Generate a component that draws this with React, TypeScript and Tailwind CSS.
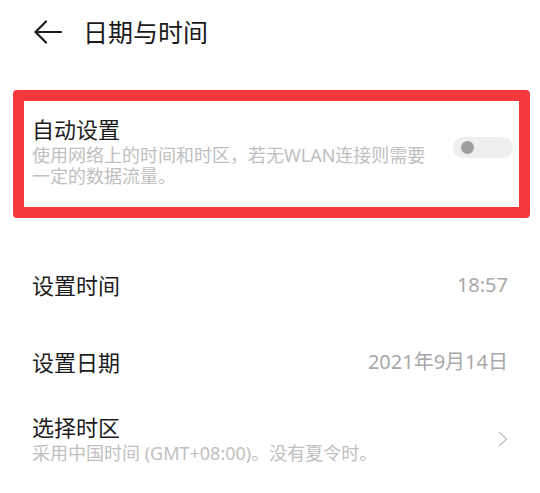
import { useState } from 'react';

const FONT = {
  fontFamily: '"Noto Sans", "Noto Sans CJK SC", sans-serif',
};

function BackArrow() {
  return (
    <svg width="28" height="24" viewBox="0 0 28 24" fill="none" aria-hidden="true">
      <path
        d="M27 12H2M12 1.5L1.5 12L12 22.5"
        stroke="#1c1c1c"
        strokeWidth="2.2"
        strokeLinecap="round"
        strokeLinejoin="round"
      />
    </svg>
  );
}

function Chevron() {
  return (
    <svg width="10" height="16" viewBox="0 0 10 16" fill="none" aria-hidden="true">
      <path
        d="M1.5 1.5L8.5 8L1.5 14.5"
        stroke="#c6c6c6"
        strokeWidth="1.6"
        strokeLinecap="round"
        strokeLinejoin="round"
      />
    </svg>
  );
}

function Toggle({ on, onChange }: { on: boolean; onChange: (v: boolean) => void }) {
  return (
    <button
      type="button"
      role="switch"
      aria-checked={on}
      onClick={() => onChange(!on)}
      className="relative mb-2 h-[21px] w-[60px] shrink-0 rounded-full bg-[#eeeeee]"
    >
      <span className="absolute left-[8px] top-[4px] h-[13px] w-[13px] rounded-full bg-[#9e9e9e]" />
    </button>
  );
}

function ValueRow({ title, value }: { title: string; value: string }) {
  return (
    <div className="flex h-[77px] items-center justify-between pl-[32px] pr-[32px]">
      <span className="text-[22px] leading-[28px] text-[#1c1c1c]">{title}</span>
      <span className="text-[20px] leading-[28px] text-[#a8a8a8]">{value}</span>
    </div>
  );
}

export default function App() {
  const [auto, setAuto] = useState(false);

  return (
    <div className="h-[493px] w-[540px] overflow-hidden bg-white" style={FONT}>
      {/* header */}
      <div className="flex h-16 items-center pl-[34px]">
        <BackArrow />
        <h1 className="ml-[21px] text-[25px] leading-[32px] text-[#1a1a1a]">日期与时间</h1>
      </div>

      {/* highlighted auto-setting row */}
      <div className="ml-[13px] mt-[26px] w-[517px] rounded-[4px] border-[11px] border-[#f5383c]">
        <div className="flex items-center justify-between pb-[20px] pl-[8px] pr-[6px] pt-[14px]">
          <div className="w-[400px] shrink-0">
            <div className="text-[22px] leading-[28px] text-[#1c1c1c]">自动设置</div>
            <p className="mt-[2px] text-[18px] leading-[21px] text-[#c0c0c0]">
              使用网络上的时间和时区，若无WLAN连接则需要一定的数据流量。
            </p>
          </div>
          <Toggle on={auto} onChange={setAuto} />
        </div>
      </div>

      {/* list */}
      <div className="mt-[28px]">
        <ValueRow title="设置时间" value="18:57" />
        <ValueRow title="设置日期" value="2021年9月14日" />
        <div className="flex h-[77px] items-center justify-between pl-[32px] pr-[32px]">
          <div className="flex flex-col">
            <span className="text-[22px] leading-[27px] text-[#1c1c1c]">选择时区</span>
            <span className="mt-[2px] text-[18px] leading-[21px] text-[#c0c0c0]">
              采用中国时间 (GMT+08:00)。没有夏令时。
            </span>
          </div>
          <Chevron />
        </div>
      </div>
    </div>
  );
}
